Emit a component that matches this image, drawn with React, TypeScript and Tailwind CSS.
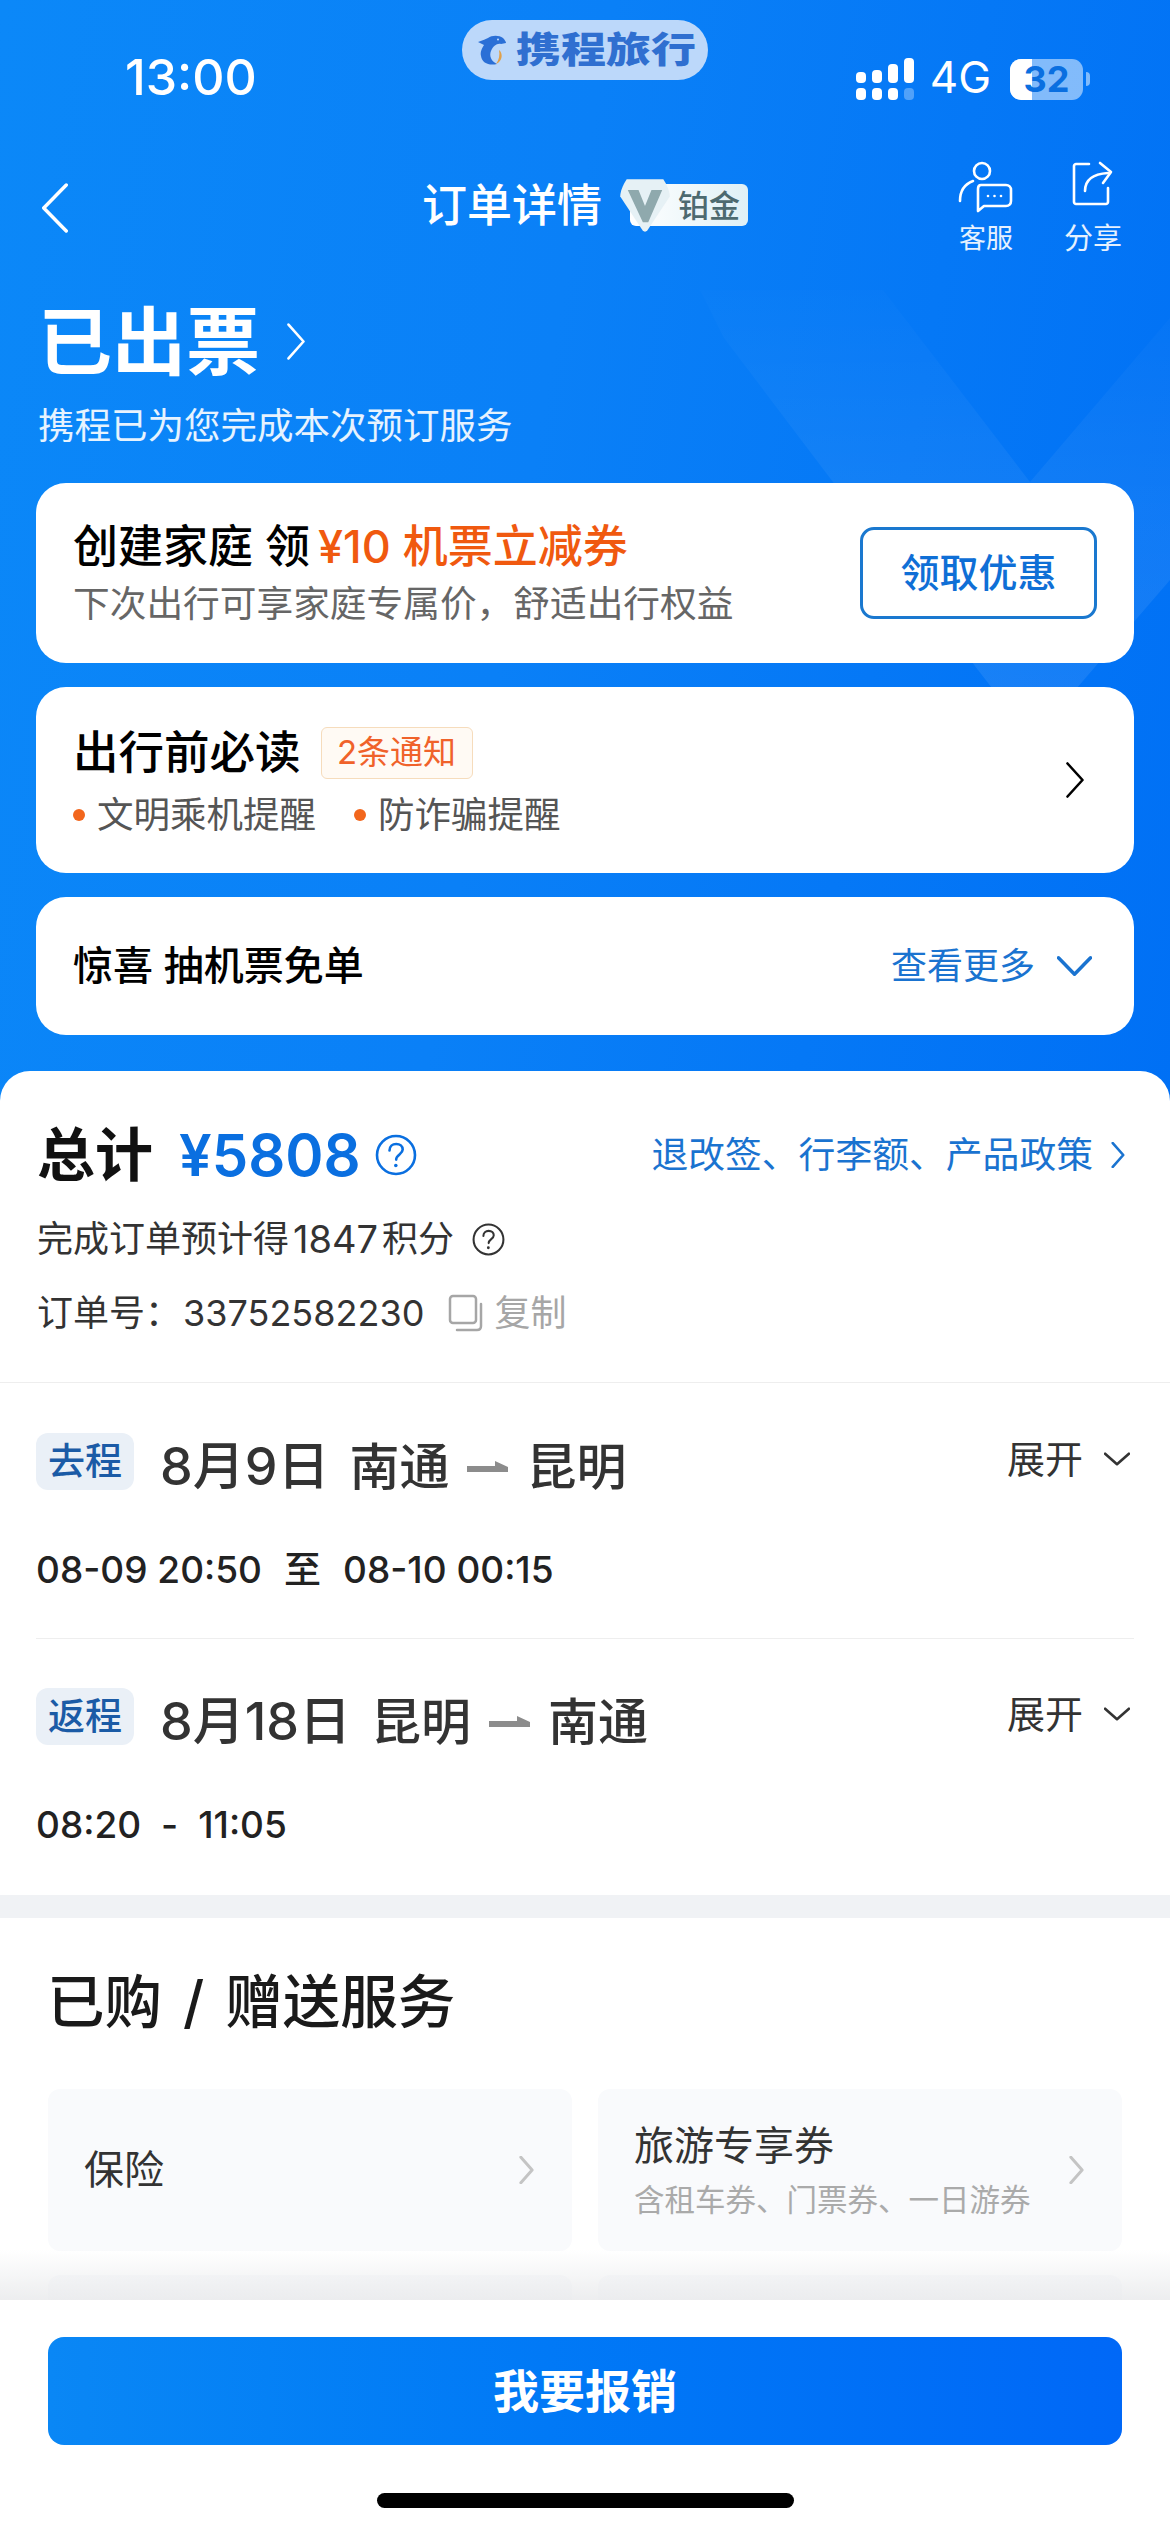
import React from 'react'

const font = { fontFamily: '"Inter", "Noto Sans CJK SC", sans-serif' }

const Chevron = ({ dir = 'right', className, width = 3.5 }: { dir?: 'right' | 'left' | 'down'; className?: string; width?: number }) => {
  const d = dir === 'right' ? 'M3 2 L21 24 L3 46' : dir === 'left' ? 'M21 2 L3 24 L21 46' : 'M2 3 L24 21 L46 3'
  const viewBox = dir === 'down' ? '0 0 48 24' : '0 0 24 48'
  return (
    <svg viewBox={viewBox} preserveAspectRatio="none" fill="none" className={className}>
      <path d={d} stroke="currentColor" strokeWidth={width} strokeLinecap="round" strokeLinejoin="round" vectorEffect="non-scaling-stroke" />
    </svg>
  )
}

const Help = ({ className }: { className?: string }) => (
  <svg viewBox="0 0 42 42" fill="none" className={className}>
    <circle cx="21" cy="21" r="19" stroke="currentColor" strokeWidth="2.6" />
    <path d="M14.5 16.5c0-4 3-6.5 6.7-6.5 3.8 0 6.5 2.4 6.5 5.6 0 4.800-6.500 5-6.500 10" stroke="currentColor" strokeWidth="2.6" strokeLinecap="round" />
    <circle cx="20.800" cy="31.500" r="1.800" fill="currentColor" />
  </svg>
)

const Signal = () => (
  <div className="flex items-end gap-[6px]">
    {[11, 13, 19, 25].map((h, i) => (
      <div key={i} className="flex w-[10px] flex-col gap-[5px]">
        <div className="rounded-[4px] bg-white" style={{ height: h }} />
        <div className={i === 3 ? 'h-[12px] rounded-[4px] bg-white/30' : 'h-[12px] rounded-[4px] bg-white'} />
      </div>
    ))}
  </div>
)

const Battery = () => (
  <div className="ml-[19px] flex items-center">
    <div className="relative flex h-[41px] w-[73px] items-center justify-center overflow-hidden rounded-[11px] bg-white/50">
      <div className="absolute inset-y-0 left-0 w-[22px] bg-white" />
      <span className="relative text-[36px] font-bold leading-none text-[#0a6fe0]">32</span>
    </div>
    <div className="ml-[3px] h-[14px] w-[4px] rounded-r-full bg-white/50" />
  </div>
)

const Dolphin = () => (
  <svg viewBox="0 0 30 31" className="h-[31px] w-[30px] shrink-0">
    <path d="M1 7 C6 5 9 4 11 3 C15 0 22 0 26 3 C28 5 29 7 29 8 L24 9 C20 8 16 11 14 16 C12 21 14 26 20 29 C12 31 5 28 4 21 C3 17 5 13 7 10 C5 9 3 8 1 7 Z" fill="#2a6fd6" />
    <path d="M22 15 C26 18 26 26 19 29 C22 25 23 20 22 15 Z" fill="#e0a04a" />
    <circle cx="21" cy="4.500" r="1" fill="#c4dcf9" />
  </svg>
)

const CustomerServiceIcon = () => (
  <svg viewBox="0 0 56 52" fill="none" className="h-[52px] w-[56px]" stroke="white" strokeWidth="2.600" strokeLinecap="round" strokeLinejoin="round">
    <circle cx="24" cy="10" r="8" />
    <path d="M2 40 C2 30 7 23 15 20" />
    <path d="M23 24 H48 C51 24 53 26 53 29 V40 C53 43 51 45 48 45 H26 L20 50 V28 C20 26 21 24 23 24 Z" />
    <circle cx="30" cy="35" r="1.300" fill="white" stroke="none" />
    <circle cx="36.500" cy="35" r="1.300" fill="white" stroke="none" />
    <circle cx="43" cy="35" r="1.300" fill="white" stroke="none" />
  </svg>
)

const ShareIcon = () => (
  <svg viewBox="0 0 42 46" fill="none" className="h-[46px] w-[42px]" stroke="white" strokeWidth="2.600" strokeLinecap="round" strokeLinejoin="round">
    <path d="M17 3 H4 C3 3 2 4 2 5 V41 C2 42 3 43 4 43 H34 C35 43 36 42 36 41 V27" />
    <path d="M13 30 C13 20 20 13 36 12" />
    <path d="M28 2 L39 11 L31 22" />
  </svg>
)

const VipBadge = () => (
  <div className="relative ml-[28px] flex h-[42px] w-[118px] items-center justify-end rounded-[6px] bg-gradient-to-r from-white to-[#dff0f6] pr-[8px]">
    <svg viewBox="0 0 50 52" className="absolute left-[-12px] top-[-7px] h-[56px] w-[54px]">
      <path d="M8 2 H42 C46 8 48 14 48 18 L27 50 C26 51 24 51 23 50 L2 18 C2 14 4 8 8 2 Z" fill="#e6f1f5" />
      <path d="M9 12 H19 L25 27 L31 12 H41 L28 42 H23 Z" fill="#8fa9ad" />
    </svg>
    <span className="text-[31px] font-medium leading-none text-[#4d6a70]">铂金</span>
  </div>
)

const CopyIcon = () => (
  <svg viewBox="0 0 38 38" fill="none" className="h-[38px] w-[38px]" stroke="#a6a6a6" strokeWidth="2.500" strokeLinejoin="round" strokeLinecap="round">
    <rect x="2" y="2" width="26" height="27" rx="3" />
    <path d="M33 10 V32 C33 34 32 36 29 36 H9" />
  </svg>
)

const FlightArrow = () => (
  <svg viewBox="0 0 41 11" className="mx-[18px] h-[11px] w-[41px]">
    <path d="M0 5 H28 V0 L41 6 V11 H0 Z" fill="#8c8c8c" />
  </svg>
)

const Trip = ({ tag, date, from, to, children }: { tag: string; date: string; from: string; to: string; children: React.ReactNode }) => (
  <div>
    <div className="flex items-start justify-between">
      <div className="flex h-[57px] items-center">
        <div className="flex h-[57px] w-[98px] items-center justify-center rounded-[12px] bg-[#eaf0f7] text-[37px] font-medium text-[#1b5ba6]">{tag}</div>
        <div className="ml-[26px] mt-[10px] flex items-center text-[50px] font-medium leading-none text-[#333]">
          <span className="mr-[20px] text-[52px]">{date}</span>
          <span>{from}</span>
          <FlightArrow />
          <span>{to}</span>
        </div>
      </div>
      <div className="flex items-center pr-[4px] text-[38px] leading-[52px] text-[#333]">
        展开
        <Chevron dir="down" width={2.600} className="ml-[21px] h-[14px] w-[26px]" />
      </div>
    </div>
    <div className="mt-[56px] flex text-[37px] font-medium leading-[48px] text-[#222]">{children}</div>
  </div>
)

const ServiceTile = ({ title, sub }: { title: string; sub?: string }) => (
  <div className="flex h-[162px] items-center justify-between rounded-[12px] bg-[#f9fafc] pl-[36px] pr-[38px]">
    <div>
      <div className="text-[40px] leading-[52px] text-[#333]">{title}</div>
      {sub && <div className="mt-[8px] text-[30.5px] leading-[40px] text-[#aaa]">{sub}</div>}
    </div>
    <Chevron width={3} className="h-[28px] w-[15px] shrink-0 text-[#c4c4c4]" />
  </div>
)

export default function App() {
  return (
    <div style={font} className="relative flex h-[2532px] w-[1170px] flex-col overflow-hidden bg-white">
      <div className="relative min-h-0 flex-1 overflow-hidden">
        {/* hero background */}
        <div className="bg-[linear-gradient(100deg,#0b88f8_0%,#0a80f7_45%,#0070f5_100%)] pb-[66px]">
          <svg viewBox="0 0 530 480" className="pointer-events-none absolute left-[640px] top-[260px] h-[480px] w-[530px]">
            <defs>
              <linearGradient id="facet" x1="0" y1="0" x2="0" y2="1">
                <stop offset="0" stopColor="white" stopOpacity="0.01" />
                <stop offset="0.5" stopColor="white" stopOpacity="0.06" />
                <stop offset="1" stopColor="white" stopOpacity="0.09" />
              </linearGradient>
            </defs>
            <path d="M60 30 L243 30 L390 222 L530 58 L530 320 L392 480 L196 226 L84 78 Z" fill="url(#facet)" />
          </svg>

          <div className="relative flex h-[150px] items-start justify-between pl-[125px] pr-[80px] pt-[48px] text-white">
            <span className="text-[50px] font-medium leading-[58px]">13:00</span>
            <div className="flex items-center pt-[9px]">
              <Signal />
              <span className="ml-[16px] -translate-y-[2px] text-[44px] leading-none">4G</span>
              <Battery />
            </div>
            <div className="absolute left-[462px] top-[20px] flex h-[60px] w-[246px] items-center rounded-[30px] bg-[#bcd8fa] pl-[15px]">
              <Dolphin />
              <span className="ml-[9px] origin-left scale-x-125 whitespace-nowrap text-[36px] font-black leading-none text-[#2f6fd0]">携程旅行</span>
            </div>
          </div>

          <div className="relative flex h-[110px] items-center text-white">
            <Chevron dir="left" className="absolute left-[40px] top-[33px] h-[50px] w-[30px]" />
            <div className="ml-[422px] flex items-center">
              <span className="text-[45px] font-medium leading-none">订单详情</span>
              <VipBadge />
            </div>
            <div className="absolute left-[958px] top-[11px] flex w-[56px] flex-col items-center">
              <CustomerServiceIcon />
              <span className="mt-[10px] whitespace-nowrap text-[27px] leading-[32px] text-white/90">客服</span>
            </div>
            <div className="absolute left-[1063px] top-[11px] flex w-[60px] flex-col items-center">
              <ShareIcon />
              <span className="mt-[16px] whitespace-nowrap text-[29px] leading-[32px] text-white/90">分享</span>
            </div>
          </div>

          <div className="relative pl-[38px] text-white">
            <div className="flex h-[125px] items-center pt-[38px]">
              <span className="text-[74px] font-bold leading-none">已出票</span>
              <Chevron width={2.600} className="ml-[26px] h-[37px] w-[20px]" />
            </div>
            <div className="mt-[19px] text-[36.5px] leading-[44px] text-white/90">携程已为您完成本次预订服务</div>
          </div>

          <div className="relative mt-[35px] flex flex-col gap-[24px] px-[36px]">
            <div className="flex h-[180px] items-center justify-between rounded-[30px] bg-white pl-[37px] pr-[37px]">
              <div>
                <div className="flex items-center text-[45px] font-medium leading-[56px] text-black">
                  <span>创建家庭 领</span>
                  <span className="ml-[8px] text-[#f0590f]">¥10 机票立减券</span>
                </div>
                <div className="mt-[5px] text-[36.7px] leading-[48px] text-[#666]">下次出行可享家庭专属价，舒适出行权益</div>
              </div>
              <div className="flex h-[92px] w-[237px] items-center justify-center rounded-[14px] border-[3px] border-[#1a78cf] text-[39px] font-medium text-[#0f6fd6]">领取优惠</div>
            </div>

            <div className="flex h-[186px] items-center justify-between rounded-[30px] bg-white pl-[37px] pr-[49px]">
              <div className="pt-[3px]">
                <div className="flex items-center">
                  <span className="text-[45.5px] font-medium leading-[56px] text-black">出行前必读</span>
                  <span className="ml-[20px] flex h-[52px] w-[152px] items-center justify-center rounded-[6px] border border-[#f6dcbc] bg-[#fffaf4] text-[33px] text-[#f0622a]">2条通知</span>
                </div>
                <div className="mt-[10px] flex items-center text-[36.5px] leading-[48px] text-[#555]">
                  <span className="h-[12px] w-[12px] rounded-full bg-[#f2661c]" />
                  <span className="ml-[12px]">文明乘机提醒</span>
                  <span className="ml-[38px] h-[12px] w-[12px] rounded-full bg-[#f2661c]" />
                  <span className="ml-[12px]">防诈骗提醒</span>
                </div>
              </div>
              <Chevron width={2.600} className="h-[36px] w-[20px] text-black" />
            </div>

            <div className="flex h-[138px] items-center justify-between rounded-[30px] bg-white pl-[37px] pr-[42px]">
              <span className="text-[40px] font-medium text-black">惊喜 抽机票免单</span>
              <div className="flex items-center text-[36px] text-[#1a73d0]">
                查看更多
                <Chevron dir="down" className="ml-[22px] h-[22px] w-[35px]" />
              </div>
            </div>
          </div>
        </div>

        {/* white sheet */}
        <div className="relative -mt-[30px] rounded-t-[30px] bg-white">
          <div className="border-b border-[#eee] px-[37px] pb-[46px] pt-[47px]">
            <div className="flex h-[74px] items-center justify-between">
              <div className="flex items-center">
                <span className="text-[58px] font-bold leading-none text-[#111]">总计</span>
                <span className="ml-[26px] text-[58px] font-semibold leading-none text-[#0a6fe0]">¥5808</span>
                <Help className="ml-[14px] h-[42px] w-[42px] text-[#0a6fe0]" />
              </div>
              <div className="flex items-center pr-[8px] text-[36.8px] text-[#1a73d0]">
                退改签、行李额、产品政策
                <Chevron width={2.600} className="ml-[18px] h-[26px] w-[14px]" />
              </div>
            </div>
            <div className="mt-[24px] flex h-[46px] items-center text-[36px] text-[#333]">
              完成订单预计得
              <span className="mx-[4px] text-[38px]">1847</span>
              积分
              <Help className="ml-[18px] h-[33px] w-[33px] text-[#333]" />
            </div>
            <div className="mt-[28px] flex h-[46px] items-center text-[36px] text-[#333]">
              <span>订单号：</span>
              <span className="ml-[2px]">33752582230</span>
              <span className="ml-[24px]"><CopyIcon /></span>
              <span className="ml-[8px] text-[#a6a6a6]">复制</span>
            </div>
          </div>

          <div className="px-[36px] pt-[50px]">
            <Trip tag="去程" date="8月9日" from="南通" to="昆明">
              <span>08-09 20:50</span>
              <span className="mx-[22px]">至</span>
              <span>08-10 00:15</span>
            </Trip>
            <div className="mb-[49px] mt-[44px] border-t border-[#eee]" />
            <Trip tag="返程" date="8月18日" from="昆明" to="南通">
              <span>08:20</span>
              <span className="mx-[20px]">-</span>
              <span>11:05</span>
            </Trip>
          </div>

          <div className="mt-[46px] h-[23px] bg-[#f0f2f5]" />

          <div className="px-[48px]">
            <div className="-ml-[1px] flex pb-[48px] pt-[45px] text-[57.5px] font-medium leading-[78px] text-[#1a1a1a]">
              <span>已购</span>
              <span className="mx-[21px]">/</span>
              <span>赠送服务</span>
            </div>
            <div className="grid grid-cols-2 gap-x-[26px] gap-y-[24px]">
              <ServiceTile title="保险" />
              <ServiceTile title="旅游专享券" sub="含租车券、门票券、一日游券" />
              <ServiceTile title="" />
              <ServiceTile title="" />
            </div>
          </div>
        </div>
      </div>

      <div className="relative flex h-[232px] shrink-0 flex-col items-center bg-white">
        <div className="absolute -top-[50px] left-0 h-[50px] w-full bg-gradient-to-t from-[#e8e9eb]/80 to-white/0" />
        <div className="mt-[37px] flex h-[108px] w-[1074px] items-center justify-center rounded-[16px] bg-gradient-to-r from-[#0a87f5] to-[#0068f7] text-[46px] font-bold text-white">我要报销</div>
        <div className="mt-[48px] h-[15px] w-[417px] rounded-full bg-black" />
      </div>
    </div>
  )
}
